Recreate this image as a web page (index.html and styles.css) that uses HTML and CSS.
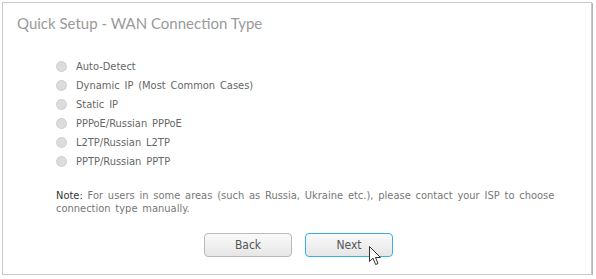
FILE: index.html
```html
<!DOCTYPE html>
<html>
<head>
<meta charset="utf-8">
<link rel="stylesheet" href="styles.css">
</head>
<body>
<div class="panel">
  <h1 class="title">Quick Setup - WAN Connection Type</h1>
  <ul class="options">
    <li class="option"><span class="radio"></span><span>Auto-Detect</span></li>
    <li class="option"><span class="radio"></span><span>Dynamic IP (Most Common Cases)</span></li>
    <li class="option"><span class="radio"></span><span>Static IP</span></li>
    <li class="option"><span class="radio"></span><span>PPPoE/Russian PPPoE</span></li>
    <li class="option"><span class="radio"></span><span>L2TP/Russian L2TP</span></li>
    <li class="option"><span class="radio"></span><span>PPTP/Russian PPTP</span></li>
  </ul>
  <p class="note"><span class="note-label">Note:</span> For users in some areas (such as Russia, Ukraine etc.), please contact your ISP to choose connection type manually.</p>
  <div class="actions">
    <button class="btn">Back</button>
    <button class="btn btn-primary">Next
      <svg class="cursor" width="13" height="20" viewBox="0 0 13 20"><path d="M0.5 0.5 L0.5 15.5 L4 12.2 L6.6 18.5 L9 17.5 L6.5 11.5 L11.5 11.5 Z" fill="#fff" stroke="#333" stroke-width="1" stroke-linejoin="round"/></svg>
    </button>
  </div>
</div>
</body>
</html>
```
FILE: styles.css
```css
html, body {
  margin: 0;
  padding: 0;
  background: #fff;
}
.panel {
  margin: 2px 0 0 2px;
  width: 590px;
  height: 273px;
  border: 1px solid #c9c9c9;
  box-shadow: 1px 1px 0 #b5b5b5;
  box-sizing: border-box;
  background: #fff;
  font-family: "DejaVu Sans Condensed", "DejaVu Sans", Verdana, sans-serif;
  font-stretch: condensed;
  word-spacing: 1.7px;
  position: relative;
}
.title {
  margin: 0;
  padding: 9px 0 0 14px;
  font-family: "Lato", "Open Sans", sans-serif;
  font-weight: normal;
  font-stretch: normal;
  word-spacing: normal;
  font-size: 15px;
  line-height: 22px;
  color: #9a9a9a;
}
.options {
  list-style: none;
  margin: 0;
  padding: 23px 0 0 53px;
}
.option {
  display: flex;
  align-items: center;
  height: 19px;
  font-size: 11px;
  color: #666;
}
.radio {
  width: 9px;
  height: 9px;
  border-radius: 50%;
  background: #dcdcdc;
  border: 1px solid #cfcfcf;
  margin-right: 9px;
  flex: none;
}
.note {
  margin: 18px 20px 0 53px;
  font-size: 11px;
  line-height: 13px;
  color: #777;
}
.note-label {
  color: #333;
}
.actions {
  display: flex;
  gap: 13px;
  padding: 18px 0 0 201px;
}
.btn {
  position: relative;
  width: 88px;
  height: 24px;
  border: 1px solid #b9b9b9;
  border-radius: 4px;
  background: linear-gradient(#fafafa, #e6e6e6);
  font-family: "DejaVu Sans Condensed", "DejaVu Sans", Verdana, sans-serif;
  font-stretch: condensed;
  font-size: 12px;
  color: #555;
  padding: 0;
}
.btn-primary {
  border-color: #35b0ea;
}
.cursor {
  position: absolute;
  left: 63px;
  top: 12px;
}
```
